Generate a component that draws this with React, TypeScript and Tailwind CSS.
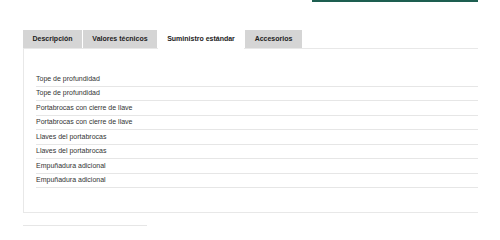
const tabs = [
  { label: 'Descripción', width: 'w-[59px]' },
  { label: 'Valores técnicos', width: 'w-[74px]' },
  { label: 'Suministro estándar', width: 'w-[86px]', active: true },
  { label: 'Accesorios', width: 'w-[57px]' },
];

const items = [
  'Tope de profundidad',
  'Tope de profundidad',
  'Portabrocas con cierre de llave',
  'Portabrocas con cierre de llave',
  'Llaves del portabrocas',
  'Llaves del portabrocas',
  'Empuñadura adicional',
  'Empuñadura adicional',
];

const App = () => {
  return (
    <div className="w-[500px] h-[227px] overflow-hidden bg-white font-['Liberation_Sans',Arial,sans-serif]">
      <div className="flex">
        <div className="ml-[312px] w-[166px] h-[2px] bg-[#1d5e50]" />
      </div>

      <div className="ml-[23px] mt-[28px] flex items-end gap-px">
        {tabs.map((tab) => (
          <div
            key={tab.label}
            className={`${tab.width} flex items-center justify-center text-[7px] font-bold text-[#222] ${
              tab.active
                ? 'h-[19px] -mb-px bg-white relative z-10 pb-px'
                : 'h-[18px] bg-[#d5d5d5]'
            }`}
          >
            {tab.label}
          </div>
        ))}
      </div>

      <div className="ml-[23px] w-[455px] h-[165px] border-l border-t border-b border-[#e8e8e8] pl-[12px] pt-[23px]">
        {items.map((item, i) => (
          <div
            key={i}
            className="h-[14.5px] flex items-center border-b border-[#e6e6e6] text-[7px] text-[#333]"
          >
            {item}
          </div>
        ))}
      </div>

      <div className="ml-[23px] mt-[12px] w-[124px] h-px bg-[#e6e6e6]" />
    </div>
  );
};

export default App;
